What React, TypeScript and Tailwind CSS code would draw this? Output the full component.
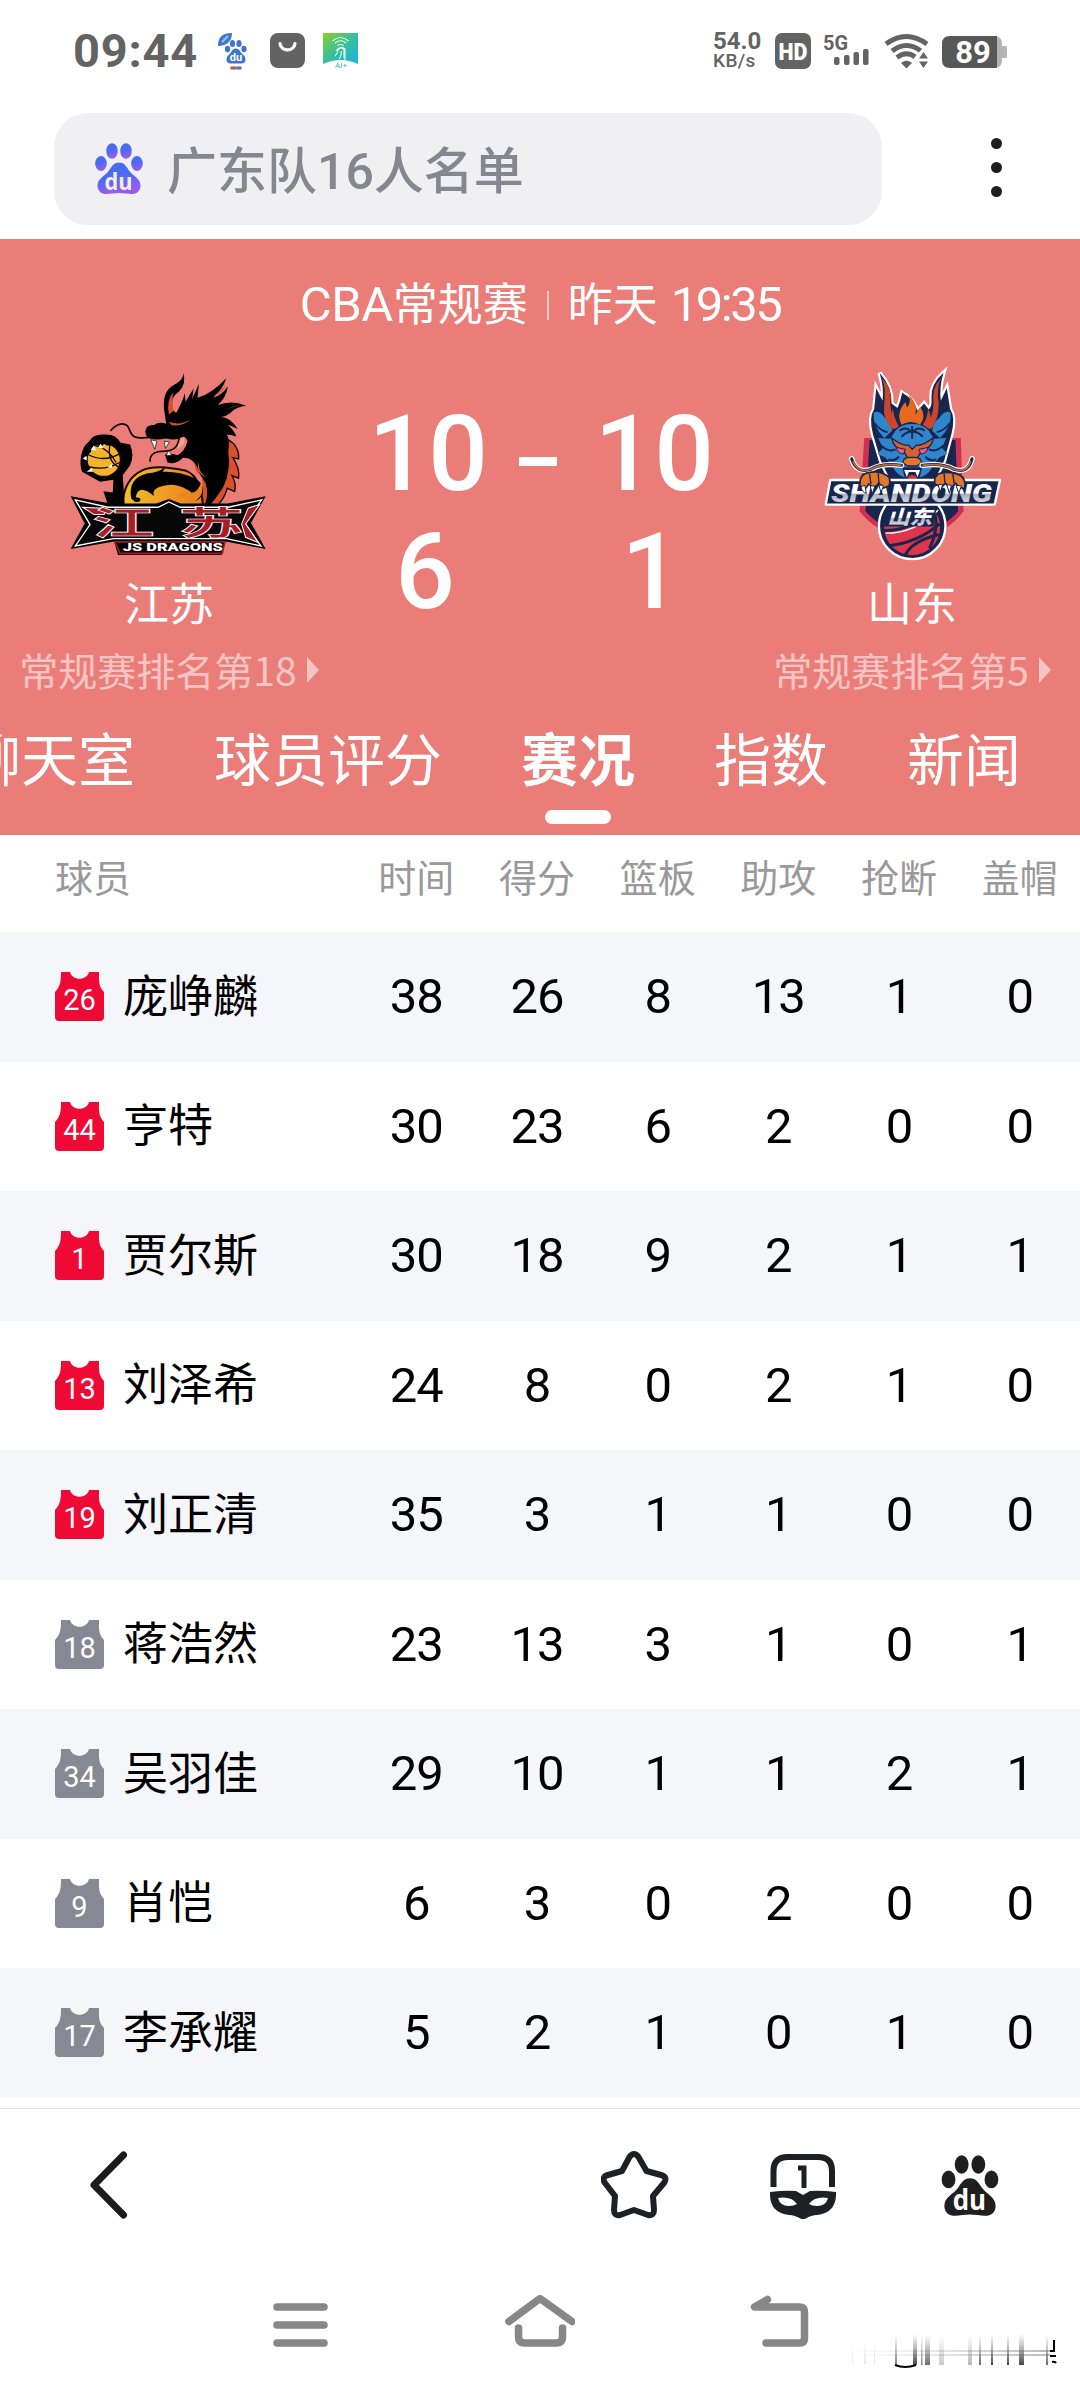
import React from 'react';

type Player = {
    number: number;
    name: string;
    starter: boolean;
    stats: number[];
};

const columns = ['时间', '得分', '篮板', '助攻', '抢断', '盖帽'];

const players: Player[] = [
    { number: 26, name: '庞峥麟', starter: true, stats: [38, 26, 8, 13, 1, 0] },
    { number: 44, name: '亨特', starter: true, stats: [30, 23, 6, 2, 0, 0] },
    { number: 1, name: '贾尔斯', starter: true, stats: [30, 18, 9, 2, 1, 1] },
    { number: 13, name: '刘泽希', starter: true, stats: [24, 8, 0, 2, 1, 0] },
    { number: 19, name: '刘正清', starter: true, stats: [35, 3, 1, 1, 0, 0] },
    { number: 18, name: '蒋浩然', starter: false, stats: [23, 13, 3, 1, 0, 1] },
    { number: 34, name: '吴羽佳', starter: false, stats: [29, 10, 1, 1, 2, 1] },
    { number: 9, name: '肖恺', starter: false, stats: [6, 3, 0, 2, 0, 0] },
    { number: 17, name: '李承耀', starter: false, stats: [5, 2, 1, 0, 1, 0] },
];

const tabs = ['聊天室', '球员评分', '赛况', '指数', '新闻'];

function Paw({ fill, hole, className }: { fill: string; hole: string; className: string }) {
    return (
        <svg viewBox="0 0 48 52" className={className}>
            <defs>
                <linearGradient id="paw" x1="0" y1="0" x2="0.3" y2="1">
                    <stop offset="0.5" stopColor="#4a6cf0" />
                    <stop offset="1" stopColor="#9a5cf0" />
                </linearGradient>
            </defs>
            <g fill={fill}>
                <ellipse cx="6" cy="20.5" rx="5.8" ry="7.4" />
                <ellipse cx="17" cy="8" rx="5.8" ry="7.8" />
                <ellipse cx="31" cy="8" rx="5.8" ry="7.8" />
                <ellipse cx="42" cy="20.5" rx="5.8" ry="7.4" />
                <path d="M24 19.500c5 0 7 3.500 10 8 4 5.500 11.500 8 11.500 15 0 6-4 8.500-9 8.500-4 0-8-1-12.500-1s-8.500 1-12.500 1c-5 0-9-2.500-9-8.500 0-7 7.500-9.500 11.500-15 3-4.500 5-8 10-8Z" />
            </g>
            <text x="23.500" y="46.500" textAnchor="middle" fontSize="24" fontWeight="700" fill={hole} fontFamily="Open Sans, sans-serif" textLength="28" lengthAdjust="spacingAndGlyphs">du</text>
        </svg>
    );
}

function StatusBar() {
    return (
        <div className="flex h-[113px] items-start pt-[30px] pl-[73px] text-[#636363]">
            <span className="w-[144px] text-[47px] leading-[41px] font-bold tracking-[0.800px]">09:44</span>

            <svg viewBox="0 0 32 38" className="mt-[2px] h-[38px] w-[32px]">
                <path d="M1 14C1 5 5 1 15 1c0 8-5 13-14 13Z" fill="#3f78c9" />
                <path d="M5 10l6-6" stroke="#9cc3f0" strokeWidth="2" />
                <g fill="#3d74cc">
                    <ellipse cx="10.500" cy="17" rx="2.600" ry="3.300" />
                    <ellipse cx="15.500" cy="11.500" rx="2.600" ry="3.500" />
                    <ellipse cx="22" cy="11.500" rx="2.600" ry="3.500" />
                    <ellipse cx="27" cy="17" rx="2.600" ry="3.300" />
                    <path d="M18.800 16.500c4 0 4.500 4 7 6s2.700 3.800 2.700 5.500c0 2-1.500 3.500-4 3.500h-11c-2.500 0-4-1.500-4-3.500 0-1.700.2-3.500 2.700-5.500s2.600-6 6.600-6Z" />
                </g>
                <text x="19" y="29" textAnchor="middle" fontSize="11" fontWeight="700" fill="#fff">du</text>
                <path d="M13.500 36h6" stroke="#c14f55" strokeWidth="3" />
                <path d="M19.500 36h5" stroke="#4c70c0" strokeWidth="3" />
            </svg>

            <svg viewBox="0 0 35 35" className="mt-[3px] ml-[21px] h-[35px] w-[35px]">
                <rect width="35" height="35" rx="8" fill="#636363" />
                <path d="M10 10.500c1 8.500 14 8.500 15 0" fill="none" stroke="#fff" strokeWidth="3.200" strokeLinecap="round" />
            </svg>

            <svg viewBox="0 0 35 35" className="mt-[3px] ml-[18px] h-[35px] w-[35px]">
                <defs>
                    <linearGradient id="ai" x1="0" y1="0" x2="1" y2="1">
                        <stop offset="0" stopColor="#8ccc2c" />
                        <stop offset="0.5" stopColor="#35c09c" />
                        <stop offset="1" stopColor="#1caee8" />
                    </linearGradient>
                </defs>
                <path d="M0 0h35v31q-17.500-8-35 0Z" fill="url(#ai)" />
                <g fill="none" stroke="#e6fff4" strokeWidth="1.100">
                    <path d="M9.500 8q8-7 16 0M12 10q5.500-4.500 11 0M14.500 12.500q3-2 6 0M12 23q3-3 3-6 3-4 6 0v8M16 26q3-4 2-8M13 18q4-6 9-2v11" />
                </g>
                <text x="18" y="34.500" textAnchor="middle" fontSize="8" fill="#2cb8b0">AI+</text>
            </svg>

            <div className="ml-[355px] flex w-[49px] flex-col pt-px">
                <span className="text-[24px] leading-[21px] font-bold">54.0</span>
                <span className="text-[19px] leading-[18px] font-medium tracking-[0.400px]">KB/s</span>
            </div>

            <svg viewBox="0 0 236 40" className="mt-px ml-[13px] h-[40px] w-[236px]">
                <rect x="0" y="2" width="36" height="36" rx="7" fill="#636363" />
                <text x="18" y="28.500" textAnchor="middle" fontSize="23" fontWeight="900" fill="#fff" textLength="29" lengthAdjust="spacingAndGlyphs">HD</text>
                <text x="48" y="19" fontSize="21" fontWeight="700" fill="#636363" textLength="25" lengthAdjust="spacingAndGlyphs">5G</text>
                <g fill="#636363">
                    <rect x="59" y="26" width="5.500" height="8" rx="2" />
                    <rect x="69" y="24" width="5.500" height="10" rx="2" />
                    <rect x="78.500" y="21" width="5.500" height="13" rx="2" />
                    <rect x="88" y="18" width="5.500" height="16" rx="2" />
                </g>
                <g fill="none" stroke="#636363" strokeWidth="5">
                    <path d="M111 13q20-15 41 0" />
                    <path d="M117 20q14.500-11 29 0" />
                    <path d="M122 26.500q9.500-7.500 19 0" />
                </g>
                <path d="M126 32q5.500-4.500 11 0l-5.500 5.500Z" fill="#636363" />
                <path d="M139 27v12h14V18h-6Z" fill="#fff" />
                <path d="M144 27.500h9l-4.500-6.500ZM144 30.500h9l-4.500 6.500Z" fill="#636363" />
                <path d="M175 5h43q9 0 9 7v3h4q1 0 1 2v8q0 2-1 2h-4v3q0 7-9 7h-43Z" fill="#b4b4b4" />
                <path d="M222 5v32h-47q-8 0-8-8V13q0-8 8-8Z" fill="#575757" />
                <text x="198" y="32" textAnchor="middle" fontSize="31" fontWeight="700" fill="#fff">89</text>
            </svg>
        </div>
    );
}

function SearchBar() {
    return (
        <div className="flex h-[126px] items-start pl-[54px]">
            <div className="flex h-[112px] w-[828px] items-center rounded-[34px] bg-[#f0f0f3] pl-[41px]">
                <Paw fill="url(#paw)" hole="#f0f0f3" className="h-[52px] w-[48px]" />
                <span className="ml-[24px] pt-[5px] text-[50px] leading-[60px] font-medium text-[#85868f]">广东队16人名单</span>
            </div>
            <div className="ml-[109px] flex flex-col gap-[13px] pt-[25px]">
                <i className="size-[11px] rounded-full bg-[#1f1f1f]" />
                <i className="size-[11px] rounded-full bg-[#1f1f1f]" />
                <i className="size-[11px] rounded-full bg-[#1f1f1f]" />
            </div>
        </div>
    );
}

function JiangsuLogo() {
    return (
        <svg viewBox="80 60 620 560" className="h-[187px] w-[207px]">
            <defs>
                <linearGradient id="flame" x1="0" x2="1">
                    <stop offset="0" stopColor="#f5c02c" />
                    <stop offset="1" stopColor="#ec7d1c" />
                </linearGradient>
            </defs>
            {/* back fins */}
            <path d="M565 265q35 20 32 58l-18-4q22 32 18 62l-20-8q14 24 8 48l-22-10q-8 30-30 52h-60q40-100 92-198Z" fill="#d9502c" stroke="#1a0505" strokeWidth="4" />
            <path d="M466 318q-8 40 20 58 10 40-6 90h62q-30-70-76-148Z" fill="#d9502c" />
            {/* body */}
            <path d="M250 465q0-80 60-108 40-18 130 2 46 18 50 106Z" fill="url(#flame)" stroke="#120404" strokeWidth="6" />
            <path d="M275 440q-10-60 50-74 30-2 52-18-4 10-8 14 50-2 94 18 40 22 22 56-10 16-30 12 16-20-14-34-40-24-84-6-20 10-14 26-46-38-54 4 20 2 12 12-14 8-26-10Z" fill="#000" />
            <path d="M412 440q6-20 32-16 30 8 42-34 10 36-12 54-14 12-36 8 4-16-26-12Z" fill="#e9861e" />
            {/* head, horn and mane */}
            <path
                d="M318 240Q320 220 344 222Q358 210 380 218L376 190C366 130 385 110 410 98Q432 84 432 66Q440 100 420 120Q390 140 398 175L410 186Q430 150 436 126L438 152L462 112L458 144L478 98L474 140Q515 130 560 82Q550 115 520 140Q545 135 565 106Q560 140 535 162Q575 145 620 164Q590 166 572 186Q560 196 545 198Q575 200 594 234Q575 224 565 222Q585 240 590 256Q572 250 562 250Q572 270 566 300Q575 360 550 410Q530 440 512 462H494Q510 430 498 396Q480 370 472 345Q455 318 430 320Q410 342 384 334L376 310Q400 306 414 312Q436 300 444 270Q435 248 420 262Q400 268 380 262Q350 268 330 262Q316 254 318 240Z"
                fill="#000"
            />
            <path d="M388 212q34 14 68-8-28 24-60 18ZM388 190q-8-40 12-66-2 40 2 56ZM524 132q26-12 34-34-4 28-34 34ZM556 180q26-18 48-18-26 4-48 18Z" fill="#d9502c" />
            <path d="M478 330q-4 40 32 50-44-8-32-50Z" fill="#e2602f" />
            {/* mouth and whiskers */}
            <path d="M334 266l12 28 6-24ZM374 270l4 22 12-20ZM380 314l8-18 8 16Z" fill="#fff" stroke="#000" strokeWidth="2" />
            <path d="M418 262q-2 36-42 38-46 0-44 30M214 238q28-30 50-14c14 20 2 44 70 34" fill="none" stroke="#120404" strokeWidth="5" strokeLinecap="round" />
            <path d="M432 258q10 22-18 34 2-22 18-34Z" fill="#f2a08f" />
            {/* claw with ball */}
            <path d="M150 270q40-34 92 4l30 6q14 34 0 62l-22 30 6 90h-50l-14-42 28 4 2-38-40 6-54-30q-16-50 22-92Z" fill="#000" />
            <circle cx="193" cy="326" r="50" fill="#f3b32b" stroke="#120404" strokeWidth="4" />
            <path d="M146 310q48 26 98-4M146 346q50 14 94-12M212 280q-10 50 26 68M170 284q40 10 60 50" fill="none" stroke="#120404" strokeWidth="4" />
            <path d="M126 320q0-32 24-50 10-22 44-20 40-2 50 28-14 10-26 0-10 12-24 0-10 14-22 2-14 4-18 24ZM128 340l16-12 6 36-14-4Z" fill="#000" />
            <path d="M154 296l10-14 6 16ZM176 290l8-12 8 14ZM130 322l12-8v14ZM142 362l16-12 2 12ZM204 348l14-10v12Z" fill="#fff" />
            {/* banner */}
            <path d="M94 435l120 22h136l38-14 36 14h140l114-22-44 80 44 78-120-22-12 40H236l-12-40-130 22 42-76Z" fill="#000" />
            <path d="M108 446l98 22h150l32-16 34 16h144l100-22-50 70 48 68-104-22H222l-114 22 44-64Z" fill="#080808" stroke="#fff" strokeWidth="4" />
            <path d="M226 572h330l-8 34H242Z" fill="#000" stroke="#9c1c28" strokeWidth="5" />
            <path d="M130 468l72 4-8 18h-30ZM626 470l34-10-42 58 38 56-38-16-12-40Z" fill="#a81c26" stroke="#fff" strokeWidth="3" />
            <text transform="translate(252 552) scale(1.900 1)" textAnchor="middle" fontSize="98" fontWeight="700" fill="#a81c26" stroke="#fff" strokeWidth="2">江</text>
            <text transform="translate(515 552) scale(2 1)" textAnchor="middle" fontSize="98" fontWeight="700" fill="#a81c26" stroke="#fff" strokeWidth="2">苏</text>
            <text x="400" y="600" textAnchor="middle" fontSize="32" fontWeight="900" fill="#fff" textLength="300" lengthAdjust="spacingAndGlyphs">JS DRAGONS</text>
        </svg>
    );
}

function ShandongLogo() {
    return (
        <svg viewBox="60 40 550 600" className="h-[200px] w-[183px]">
            <defs>
                <linearGradient id="steel" x1="0" y1="0" x2="0" y2="1">
                    <stop offset="0.5" stopColor="#fff" />
                    <stop offset="0.55" stopColor="#a9b0bf" />
                    <stop offset="1" stopColor="#eef0f5" />
                </linearGradient>
            </defs>
            {/* shield */}
            <path d="M190 262h290l8 220q-40 60-154 96-114-36-158-96Z" fill="#cf2f55" />
            <path d="M206 268h258l8 214q-40 50-138 82-98-32-140-82Z" fill="#17254f" />
            {/* head silhouette */}
            <path
                d="M236 66Q275 110 272 158L290 172L298 150L304 126Q340 145 350 180L370 158L384 176Q395 165 392 140Q390 100 428 66Q415 110 420 150L438 112L448 175Q465 200 452 250L430 330L400 392H270L240 330L216 250Q203 200 220 175L226 112L245 150Q250 110 236 66Z"
                fill="#17254f"
                stroke="#fff"
                strokeWidth="13"
                paintOrder="stroke"
            />
            {/* ears */}
            <path d="M218 186Q236 176 252 202Q270 212 274 240L250 262Q216 230 218 186ZM450 186Q432 176 416 202Q398 212 394 240L418 262Q452 230 450 186Z" fill="#2f86cc" />
            {/* face */}
            <path d="M284 240Q304 218 334 220Q364 218 384 240L400 264L436 262L424 292L440 310L416 320L396 344Q385 380 334 386Q285 380 275 344L252 320L230 310L246 292L232 262L268 264Z" fill="#2f86cc" />
            <path d="M334 226v38M302 258q32-32 64 0M296 240q20-14 34 2M372 240q-20-14-34 2M240 284q22 22 44 12M428 284q-22 22-44 12M262 326q20 8 32-8M406 326q-20 8-32-8" fill="none" stroke="#17254f" strokeWidth="6" />
            <path d="M222 218q16 22 38 26M446 218q-16 22-38 26" fill="none" stroke="#17254f" strokeWidth="5" />
            {/* horns */}
            <path d="M244 82Q276 115 268 158Q270 190 286 224L272 234Q244 204 250 160Q256 118 244 82ZM420 82Q406 115 414 158Q414 204 392 234L376 222Q398 196 398 158Q392 112 420 82Z" fill="#c9452c" />
            <path d="M302 222Q284 186 314 154L318 170Q332 158 324 132Q352 158 344 192L358 168Q378 196 358 222Q330 206 302 222Z" fill="#e56a1f" />
            <path d="M294 228Q280 204 276 174Q266 204 276 236ZM366 222Q380 204 382 174Q396 204 388 236Z" fill="#cf4630" />
            {/* brows, eyes and nose */}
            <path d="M272 262Q304 286 324 284L334 296L346 284Q370 284 398 260Q394 292 362 300L350 322H320L308 300Q278 292 272 262Z" fill="#d9602c" stroke="#17254f" strokeWidth="4" />
            <path d="M286 290l28 6-6 14q-18 0-22-20ZM382 290l-28 6 6 14q18 0 22-20Z" fill="#e85a86" stroke="#17254f" strokeWidth="3" />
            <path d="M306 336q0-14 18-16h20q18 2 18 16l-14 10h-28Z" fill="#e0772a" stroke="#17254f" strokeWidth="4" />
            {/* mouth */}
            <path d="M304 350h60l-10 42h-40Z" fill="#17254f" />
            <path d="M310 358l8 22 6-16h20l6 16 8-22Z" fill="#fff" />
            <path d="M320 380q14-14 28 0l-4 10h-20Z" fill="#d32f3d" />
            {/* whiskers */}
            <path d="M302 344q-60-8-92 12-44 14-58-32M364 344q60-8 96 12 44 14 54-32" fill="none" stroke="#fff" strokeWidth="16" strokeLinecap="round" />
            <path d="M302 344q-60-8-92 12-44 14-58-32M364 344q60-8 96 12 44 14 54-32" fill="none" stroke="#17254f" strokeWidth="9" strokeLinecap="round" />
            <path d="M302 344q-60-8-92 12-38 12-54-24M364 344q60-8 96 12 38 12 50-24" fill="none" stroke="#b5703c" strokeWidth="5" />
            {/* ball */}
            <circle cx="334" cy="526" r="100" fill="#17254f" stroke="#fff" strokeWidth="7" />
            <circle cx="334" cy="530" r="84" fill="#e0344c" />
            <path d="M250 540q90 0 156-70M262 586q90-10 154-66M398 470q20 60-12 124M314 612q20-40 100-60" fill="none" stroke="#17254f" strokeWidth="9" />
            <path d="M254 548q90 0 158-70" fill="none" stroke="#fff" strokeWidth="4" />
            {/* wordmark */}
            <path d="M88 388h510l-16 74H74Z" fill="#17254f" stroke="#fff" strokeWidth="7" strokeLinejoin="round" />
            <text x="332" y="454" textAnchor="middle" fontSize="78" fontWeight="900" fontStyle="italic" fill="url(#steel)" textLength="484" lengthAdjust="spacingAndGlyphs">SHANDONG</text>
            <path d="M256 466h152l-10 62H244Z" fill="#17254f" />
            <text x="326" y="520" textAnchor="middle" fontSize="58" fontWeight="900" fontStyle="italic" fill="url(#steel)" textLength="134" lengthAdjust="spacingAndGlyphs">山东</text>
            {/* claws */}
            <path d="M178 410q-6-40 26-44 30-8 56 10 12 10 4 30l-16 6-14-14-16 16-14-14-12 16ZM402 400q-4-24 16-32 34-8 60 6 18 10 14 40l-16-4-12-12-14 16-16-16-12 12Z" fill="#e0782a" stroke="#17254f" strokeWidth="5" />
            <path d="M206 370l4 30M232 368l2 30M430 368l2 28M456 368l4 30" stroke="#17254f" strokeWidth="4" />
            <path d="M180 408q4 18 16 20l-4-24ZM208 406l6 24 8-24ZM234 402l6 24 8-20ZM412 402l6 22 8-22ZM438 402l8 26 6-24ZM466 404l8 24 8-22Z" fill="#fff" stroke="#17254f" strokeWidth="3" />
        </svg>
    );
}

function Team({ name, rank, logo }: { name: string; rank: string; logo: React.ReactNode }) {
    return (
        <div className="flex flex-col items-center pt-[29px]">
            <div className="flex h-[200px] items-center">{logo}</div>
            <div className="mt-[17px] h-[50px] text-[45px] leading-[50px] text-white">{name}</div>
            <div className="mt-[18px] flex h-[40px] items-center gap-[10px] font-['Noto_Sans_CJK_SC',sans-serif] text-[39px] leading-[40px] text-white/55">
                {rank}
                <svg viewBox="0 0 12 26" className="mt-[2px] h-[26px] w-[12px]">
                    <path d="M0 0l12 13L0 26Z" fill="currentColor" />
                </svg>
            </div>
        </div>
    );
}

function MatchHeader() {
    return (
        <section className="h-[596px] overflow-hidden bg-[#eb7d79] pt-[36px] text-white">
            <div className="flex h-[60px] items-center justify-center text-[45px] leading-[60px]">
                <span className="text-[49px] tracking-[-0.500px]">CBA</span>
                <span className="pt-[2px]">常规赛</span>
                <i className="mx-[19px] h-[29px] w-[2px] bg-white/60" />
                <span className="pt-[2px]">昨天</span>
                <span className="ml-[13px] text-[49px] tracking-[-2.500px]">19:35</span>
            </div>

            <div className="grid h-[355px] grid-cols-[338px_406px_336px]">
                <Team name="江苏" rank="常规赛排名第18" logo={<JiangsuLogo />} />
                <div className="grid auto-rows-[118px] grid-cols-[113px_113px_113px] content-start justify-center pt-[61px] pr-[6px] text-center text-[105px] leading-[118px] font-medium">
                    <span>10</span>
                    <span className="flex items-center justify-center pt-[12px]">
                        <i className="h-[9px] w-[38px] bg-white" />
                    </span>
                    <span>10</span>
                    <span>6</span>
                    <span />
                    <span>1</span>
                </div>
                <Team name="山东" rank="常规赛排名第5" logo={<ShandongLogo />} />
            </div>

            <nav className="mt-[34px] ml-[-36px] flex gap-[79px] text-[57px] leading-[76px] whitespace-nowrap">
                {tabs.map((tab) => (
                    <div key={tab} className="flex flex-col items-center">
                        <span className={tab === '赛况' ? 'font-bold' : ''}>{tab}</span>
                        {tab === '赛况' && <i className="mt-[10px] h-[14px] w-[66px] rounded-full bg-white" />}
                    </div>
                ))}
            </nav>
        </section>
    );
}

function Jersey({ number, starter }: { number: number; starter: boolean }) {
    return (
        <svg viewBox="0 0 49 49" className="h-[49px] w-[49px] shrink-0">
            <path
                d="M6 0h9c2 9 17 9 19 0h10c0 7-1 14 5 20v25q0 4-4 4H4q-4 0-4-4V20C6 14 6 7 6 0Z"
                fill={starter ? '#ee0a35' : '#868893'}
            />
            <text x="24.500" y="38" textAnchor="middle" fontSize="29" fill="#fff">{number}</text>
        </svg>
    );
}

function StatsTable() {
    return (
        <section className="h-[1273px]">
            <div className="flex h-[97px] items-center font-['Noto_Sans_CJK_SC',sans-serif] text-[38px] leading-[50px] text-[#999]">
                <div className="w-[356px] pb-[15px] pl-[55px]">球员</div>
                <div className="grid flex-1 grid-cols-6 pb-[15px] text-center">
                    {columns.map((label) => (
                        <span key={label}>{label}</span>
                    ))}
                </div>
            </div>
            {players.map((player) => (
                <div key={player.number} className="flex h-[129.500px] items-center text-black odd:bg-white even:bg-[#f4f6fa]">
                    <div className="flex w-[356px] items-center gap-[19px] pl-[55px]">
                        <Jersey number={player.number} starter={player.starter} />
                        <span className="pt-[2px] text-[45px] leading-[60px]">{player.name}</span>
                    </div>
                    <div className="grid flex-1 grid-cols-6 pt-px text-center text-[49px] leading-[60px] tracking-[-1px]">
                        {player.stats.map((value, idx) => (
                            <span key={idx}>{value}</span>
                        ))}
                    </div>
                </div>
            ))}
        </section>
    );
}

function Toolbar() {
    return (
        <div className="flex h-[152px] items-start border-t border-[#e2e2e2] pt-[42px] pl-[88px]">
            <svg viewBox="0 0 40 68" className="h-[68px] w-[40px]" fill="none" stroke="#1c1c20" strokeWidth="7" strokeLinecap="round" strokeLinejoin="round">
                <path d="M35.500 4L6 34l29.500 30" />
            </svg>
            <svg viewBox="0 0 68 68" className="ml-[473px] h-[68px] w-[68px]" fill="none" stroke="#1f2026" strokeWidth="6" strokeLinejoin="round">
                <path d="M28.500 6q4.500-6 9 0l8 14 14.500 4q7 2 3 8l-11 13 1 14q0 6-6 5l-14-5-14 5q-6 1-6-5l1-14-10-13q-4-6 3-8l14-4Z" />
            </svg>
            <svg viewBox="0 0 66 68" className="ml-[101px] h-[68px] w-[66px]">
                <path d="M3.500 36V20Q3.500 6 18 6h30q14 0 14 14v16" fill="none" stroke="#1f2026" strokeWidth="6" />
                <path d="M28 17h6v20" fill="none" stroke="#1f2026" strokeWidth="5" />
                <path
                    fillRule="evenodd"
                    fill="#1f2026"
                    d="M0 41q16-2 26-1l7 4 7-4q10-1 26 1 1 21-19 23-6 0-14 5-8-5-14-5Q-1 62 0 41ZM8 47q2 8 11 8 5 0 8-2-6-8-19-6ZM58 47q-2 8-11 8-5 0-8-2 6-8 19-6Z"
                />
            </svg>
            <Paw fill="#1f1f1f" hole="#fff" className="mt-[4px] ml-[105px] h-[62px] w-[58px]" />
        </div>
    );
}

function SystemNav() {
    return (
        <div className="flex h-[128px] items-start pt-[30px] pl-[273px]">
            <svg viewBox="0 0 55 60" className="h-[60px] w-[55px]" stroke="#878787" strokeWidth="7.500" strokeLinecap="round">
                <path d="M4 17h47M4 35h47M4 53h47" />
            </svg>
            <svg viewBox="0 0 70 60" className="ml-[177px] h-[60px] w-[70px]" fill="none" stroke="#878787" strokeWidth="7.500" strokeLinecap="round" strokeLinejoin="round">
                <path d="M4 31.500L35 8.500l32 23M13.500 38v9q0 6 6 6h32q6 0 6-6v-9" />
            </svg>
            <svg viewBox="0 0 60 60" className="ml-[175px] h-[60px] w-[60px]" fill="none" stroke="#878787" strokeWidth="7.500" strokeLinecap="round" strokeLinejoin="round">
                <path d="M17.500 9.500L4.500 17h45q5 0 5 5v26q0 5-5 5H16" />
            </svg>
            <svg viewBox="0 0 230 38" className="mt-[42px] ml-[18px] h-[38px] w-[230px]">
                <defs>
                    <linearGradient id="streak" x1="0" y1="0" x2="0" y2="1">
                        <stop offset="0" stopColor="#777" stopOpacity="0" />
                        <stop offset="1" stopColor="#444" />
                    </linearGradient>
                    <linearGradient id="trail">
                        <stop offset="0.1" stopColor="#999" stopOpacity="0" />
                        <stop offset="1" stopColor="#777" />
                    </linearGradient>
                </defs>
                <rect y="18" width="222" height="2" fill="url(#trail)" opacity="0.5" />
                <rect y="22" width="222" height="2" fill="url(#trail)" opacity="0.5" />
                <g fill="url(#streak)">
                    <rect x="24" y="6" width="1" height="26" opacity="0.12" />
                    <rect x="36" y="6" width="2" height="26" opacity="0.12" />
                    <rect x="46" y="6" width="1" height="26" opacity="0.15" />
                    <rect x="67" y="2" width="2" height="31" opacity="0.7" />
                    <rect x="85" y="2" width="4" height="31" />
                    <rect x="93" y="2" width="1.500" height="31" opacity="0.7" />
                    <rect x="97" y="2" width="5" height="31" opacity="0.8" />
                    <rect x="111" y="2" width="5" height="31" opacity="0.3" />
                    <rect x="140" y="2" width="4" height="31" opacity="0.4" />
                    <rect x="151" y="2" width="2" height="31" opacity="0.8" />
                    <rect x="163" y="2" width="2" height="31" />
                    <rect x="179" y="2" width="2" height="31" />
                    <rect x="191" y="2" width="5" height="31" />
                    <rect x="218" y="2" width="2" height="31" opacity="0.8" />
                </g>
                <path d="M67 33q10 4 21 0" fill="none" stroke="#000" strokeWidth="2" />
                <path d="M226 8v11h-4M222 24h6M224 30q3-1 4 1" fill="none" stroke="#000" strokeWidth="2" />
            </svg>
        </div>
    );
}

export default function App() {
    return (
        <main className="h-[2388px] w-[1080px] overflow-hidden bg-white font-['Roboto','Noto_Sans_CJK_SC',sans-serif]">
            <StatusBar />
            <SearchBar />
            <MatchHeader />
            <StatsTable />
            <Toolbar />
            <SystemNav />
        </main>
    );
}
